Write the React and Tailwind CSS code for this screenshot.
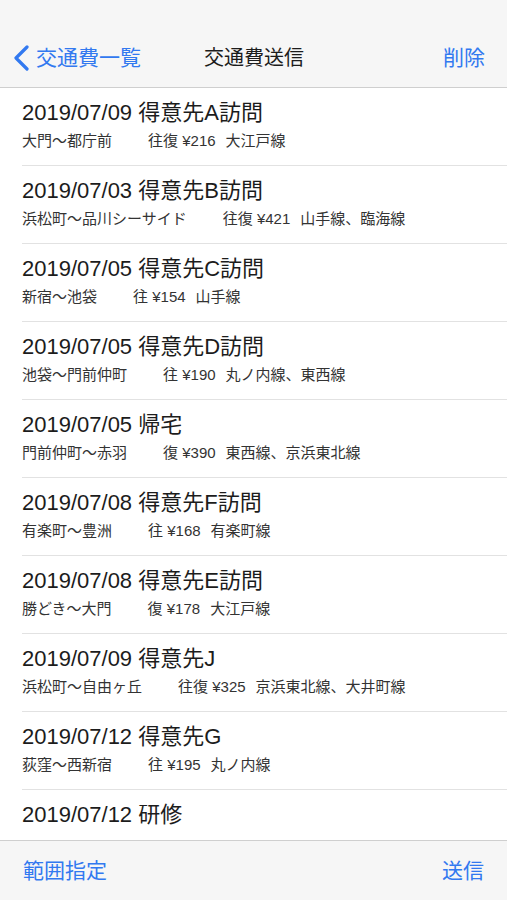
import React from 'react';

const items = [
  { date: '2019/07/09', title: '得意先A訪問', route: '大門〜都庁前', trip: '往復', fare: '¥216', lines: '大江戸線' },
  { date: '2019/07/03', title: '得意先B訪問', route: '浜松町〜品川シーサイド', trip: '往復', fare: '¥421', lines: '山手線、臨海線' },
  { date: '2019/07/05', title: '得意先C訪問', route: '新宿〜池袋', trip: '往', fare: '¥154', lines: '山手線' },
  { date: '2019/07/05', title: '得意先D訪問', route: '池袋〜門前仲町', trip: '往', fare: '¥190', lines: '丸ノ内線、東西線' },
  { date: '2019/07/05', title: '帰宅', route: '門前仲町〜赤羽', trip: '復', fare: '¥390', lines: '東西線、京浜東北線' },
  { date: '2019/07/08', title: '得意先F訪問', route: '有楽町〜豊洲', trip: '往', fare: '¥168', lines: '有楽町線' },
  { date: '2019/07/08', title: '得意先E訪問', route: '勝どき〜大門', trip: '復', fare: '¥178', lines: '大江戸線' },
  { date: '2019/07/09', title: '得意先J', route: '浜松町〜自由ヶ丘', trip: '往復', fare: '¥325', lines: '京浜東北線、大井町線' },
  { date: '2019/07/12', title: '得意先G', route: '荻窪〜西新宿', trip: '往', fare: '¥195', lines: '丸ノ内線' },
  { date: '2019/07/12', title: '研修' },
];

const font = { fontFamily: '"Liberation Sans", "Noto Sans CJK JP", sans-serif' };

function Row({ item }) {
  return (
    <div className="ml-[22px] h-[78px] shrink-0 border-b border-[#e2e2e2] pt-[12px]">
      <div className="text-[22px] leading-[26px] text-[#1c1c1c]">
        {item.date} {item.title}
      </div>
      {item.route && (
        <div className="mt-[5px] flex text-[15px] leading-[20px] text-[#333]">
          <span>{item.route}</span>
          <span className="ml-[36px]">{item.trip} {item.fare}</span>
          <span className="ml-[10px]">{item.lines}</span>
        </div>
      )}
    </div>
  );
}

export default function App() {
  return (
    <div className="flex h-[900px] w-[507px] flex-col overflow-hidden bg-white" style={font}>
      <div className="h-[88px] shrink-0 border-b border-[#cfcfcf] bg-[#f6f6f6] pt-[28px]">
        <div className="relative flex h-[60px] items-center justify-between">
          <div className="flex items-center pl-[12px] text-[21px] text-[#3279f0]">
            <svg width="19" height="26" viewBox="0 0 19 26" className="mr-[5px]">
              <polyline points="15,2 4,13 15,24" fill="none" stroke="#3279f0" strokeWidth="3.2" strokeLinecap="round" strokeLinejoin="round" />
            </svg>
            <span>交通費一覧</span>
          </div>
          <div className="absolute left-[204px] text-[20px] text-[#1c1c1c]">交通費送信</div>
          <div className="pr-[22px] text-[21px] text-[#3279f0]">削除</div>
        </div>
      </div>
      <div className="flex min-h-0 flex-1 flex-col overflow-hidden">
        {items.map((item, i) => (
          <Row key={i} item={item} />
        ))}
      </div>
      <div className="flex h-[60px] shrink-0 items-center justify-between border-t border-[#cfcfcf] bg-[#f6f6f6] px-[23px] text-[21px] text-[#3279f0]">
        <span>範囲指定</span>
        <span>送信</span>
      </div>
    </div>
  );
}
